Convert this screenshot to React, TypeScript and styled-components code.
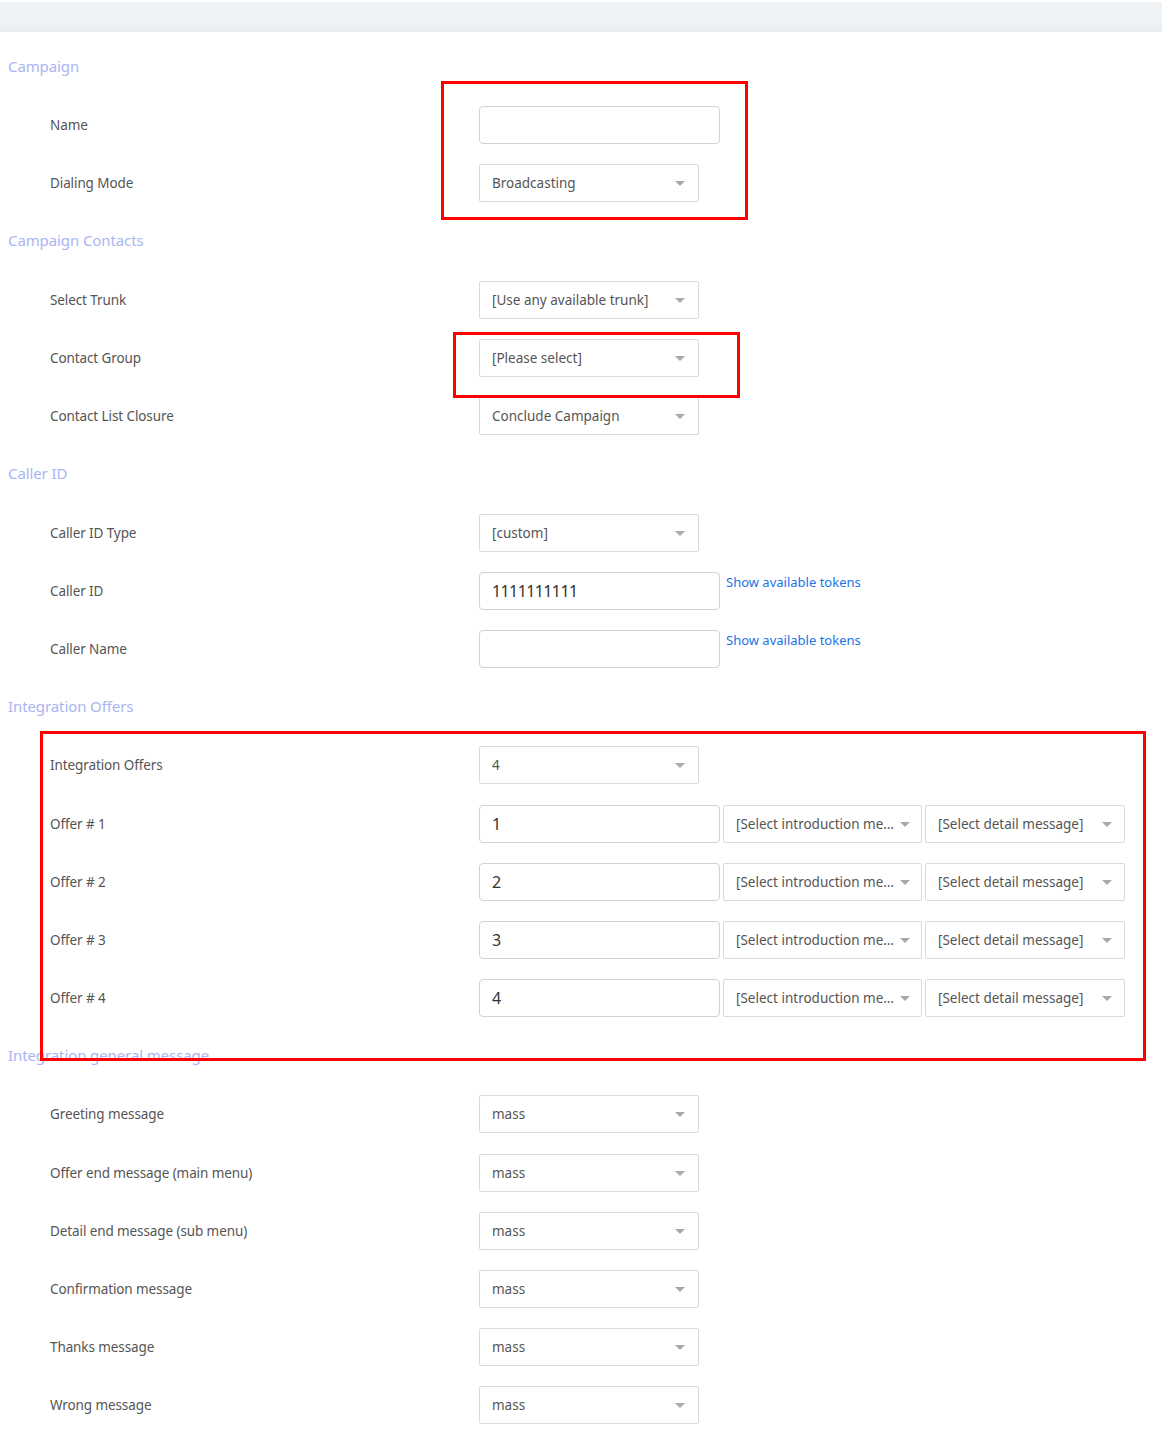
import React from "react";
import styled, { createGlobalStyle } from "styled-components";

const GlobalStyle = createGlobalStyle`
    html, body {
        margin: 0;
        padding: 0;
        background: #ffffff;
        font-family: "Noto Sans", "Open Sans", sans-serif;
    }
`;

const Page = styled.div`
    position: relative;
    width: 1162px;
    min-height: 1430px;
    padding-top: 2px;
    box-sizing: border-box;
    background: #fff;
`;

const TopBar = styled.div`
    height: 30px;
    background: linear-gradient(to bottom, #f1f4f7 0%, #eef2f5 70%, #e6ebef 100%);
`;

const Form = styled.div`
    padding-top: 6px;
    display: flex;
    flex-direction: column;
`;

const Row = styled.div`
    height: 58.2px;
    display: flex;
    align-items: center;
`;

const SectionTitle = styled.div`
    padding-left: 8px;
    margin-bottom: 3px;
    font-size: 15px;
    color: #a9b5f3;
    letter-spacing: -0.1px;
`;

const Label = styled.div`
    width: 479px;
    flex-shrink: 0;
    padding-left: 50px;
    box-sizing: border-box;
    font-size: 13.5px;
    color: #555;
    letter-spacing: -0.1px;
`;

const Controls = styled.div`
    display: flex;
    align-items: flex-start;
    gap: 3px;
`;

const TextBox = styled.div<{ $w?: number }>`
    width: ${(p) => p.$w ?? 241}px;
    height: 38px;
    box-sizing: border-box;
    border: 1px solid #cfd3d8;
    border-radius: 4px;
    padding: 0 12px;
    display: flex;
    align-items: center;
    font-size: 16px;
    color: #333;
    letter-spacing: -0.6px;
`;

const SelectBox = styled.div<{ $w?: number }>`
    width: ${(p) => p.$w ?? 220}px;
    height: 38px;
    box-sizing: border-box;
    border: 1px solid #d8dbdf;
    border-radius: 2px;
    padding: 0 26px 0 12px;
    position: relative;
    display: flex;
    align-items: center;
    font-size: 13.5px;
    color: #555;
    & > span {
        white-space: nowrap;
        overflow: hidden;
        text-overflow: ellipsis;
    }
`;

const Arrow = styled.i<{ $right?: number }>`
    position: absolute;
    right: ${(p) => p.$right ?? 13}px;
    top: 16px;
    width: 0;
    height: 0;
    border-left: 5px solid transparent;
    border-right: 5px solid transparent;
    border-top: 5px solid #a5a9ae;
`;

const TokenLink = styled.a`
    margin-left: 3px;
    margin-top: 1px;
    font-size: 13px;
    color: #1a73e8;
    text-decoration: none;
    cursor: pointer;
`;

const Highlight = styled.div<{ $x: number; $y: number; $w: number; $h: number }>`
    position: absolute;
    left: ${(p) => p.$x}px;
    top: ${(p) => p.$y}px;
    width: ${(p) => p.$w}px;
    height: ${(p) => p.$h}px;
    box-sizing: border-box;
    border: 3px solid #ff0000;
    pointer-events: none;
`;

const Select = ({ value, w, right }: { value: string; w?: number; right?: number }) => (
    <SelectBox $w={w}>
        <span>{value}</span>
        <Arrow $right={right} />
    </SelectBox>
);

const Field = ({ label, children }: { label: string; children: React.ReactNode }) => (
    <Row>
        <Label>{label}</Label>
        <Controls>{children}</Controls>
    </Row>
);

const Section = ({ title }: { title: string }) => (
    <Row>
        <SectionTitle>{title}</SectionTitle>
    </Row>
);

const offers = ["1", "2", "3", "4"];
const messages = [
    "Greeting message",
    "Offer end message (main menu)",
    "Detail end message (sub menu)",
    "Confirmation message",
    "Thanks message",
    "Wrong message",
];

export default function App() {
    return (
        <Page>
            <GlobalStyle />
            <TopBar />
            <Form>
                <Section title="Campaign" />
                <Field label="Name">
                    <TextBox />
                </Field>
                <Field label="Dialing Mode">
                    <Select value="Broadcasting" />
                </Field>

                <Section title="Campaign Contacts" />
                <Field label="Select Trunk">
                    <Select value="[Use any available trunk]" />
                </Field>
                <Field label="Contact Group">
                    <Select value="[Please select]" />
                </Field>
                <Field label="Contact List Closure">
                    <Select value="Conclude Campaign" />
                </Field>

                <Section title="Caller ID" />
                <Field label="Caller ID Type">
                    <Select value="[custom]" />
                </Field>
                <Field label="Caller ID">
                    <TextBox>1111111111</TextBox>
                    <TokenLink>Show available tokens</TokenLink>
                </Field>
                <Field label="Caller Name">
                    <TextBox />
                    <TokenLink>Show available tokens</TokenLink>
                </Field>

                <Section title="Integration Offers" />
                <Field label="Integration Offers">
                    <Select value="4" />
                </Field>
                {offers.map((n) => (
                    <Field key={n} label={`Offer # ${n}`}>
                        <TextBox>{n}</TextBox>
                        <Select value="[Select introduction message]" w={199} right={11} />
                        <Select value="[Select detail message]" w={200} right={12} />
                    </Field>
                ))}

                <Section title="Integration general message" />
                {messages.map((m) => (
                    <Field key={m} label={m}>
                        <Select value="mass" />
                    </Field>
                ))}
            </Form>

            <Highlight $x={441} $y={81} $w={307} $h={139} />
            <Highlight $x={453} $y={332} $w={287} $h={66} />
            <Highlight $x={40} $y={731} $w={1106} $h={330} />
        </Page>
    );
}
